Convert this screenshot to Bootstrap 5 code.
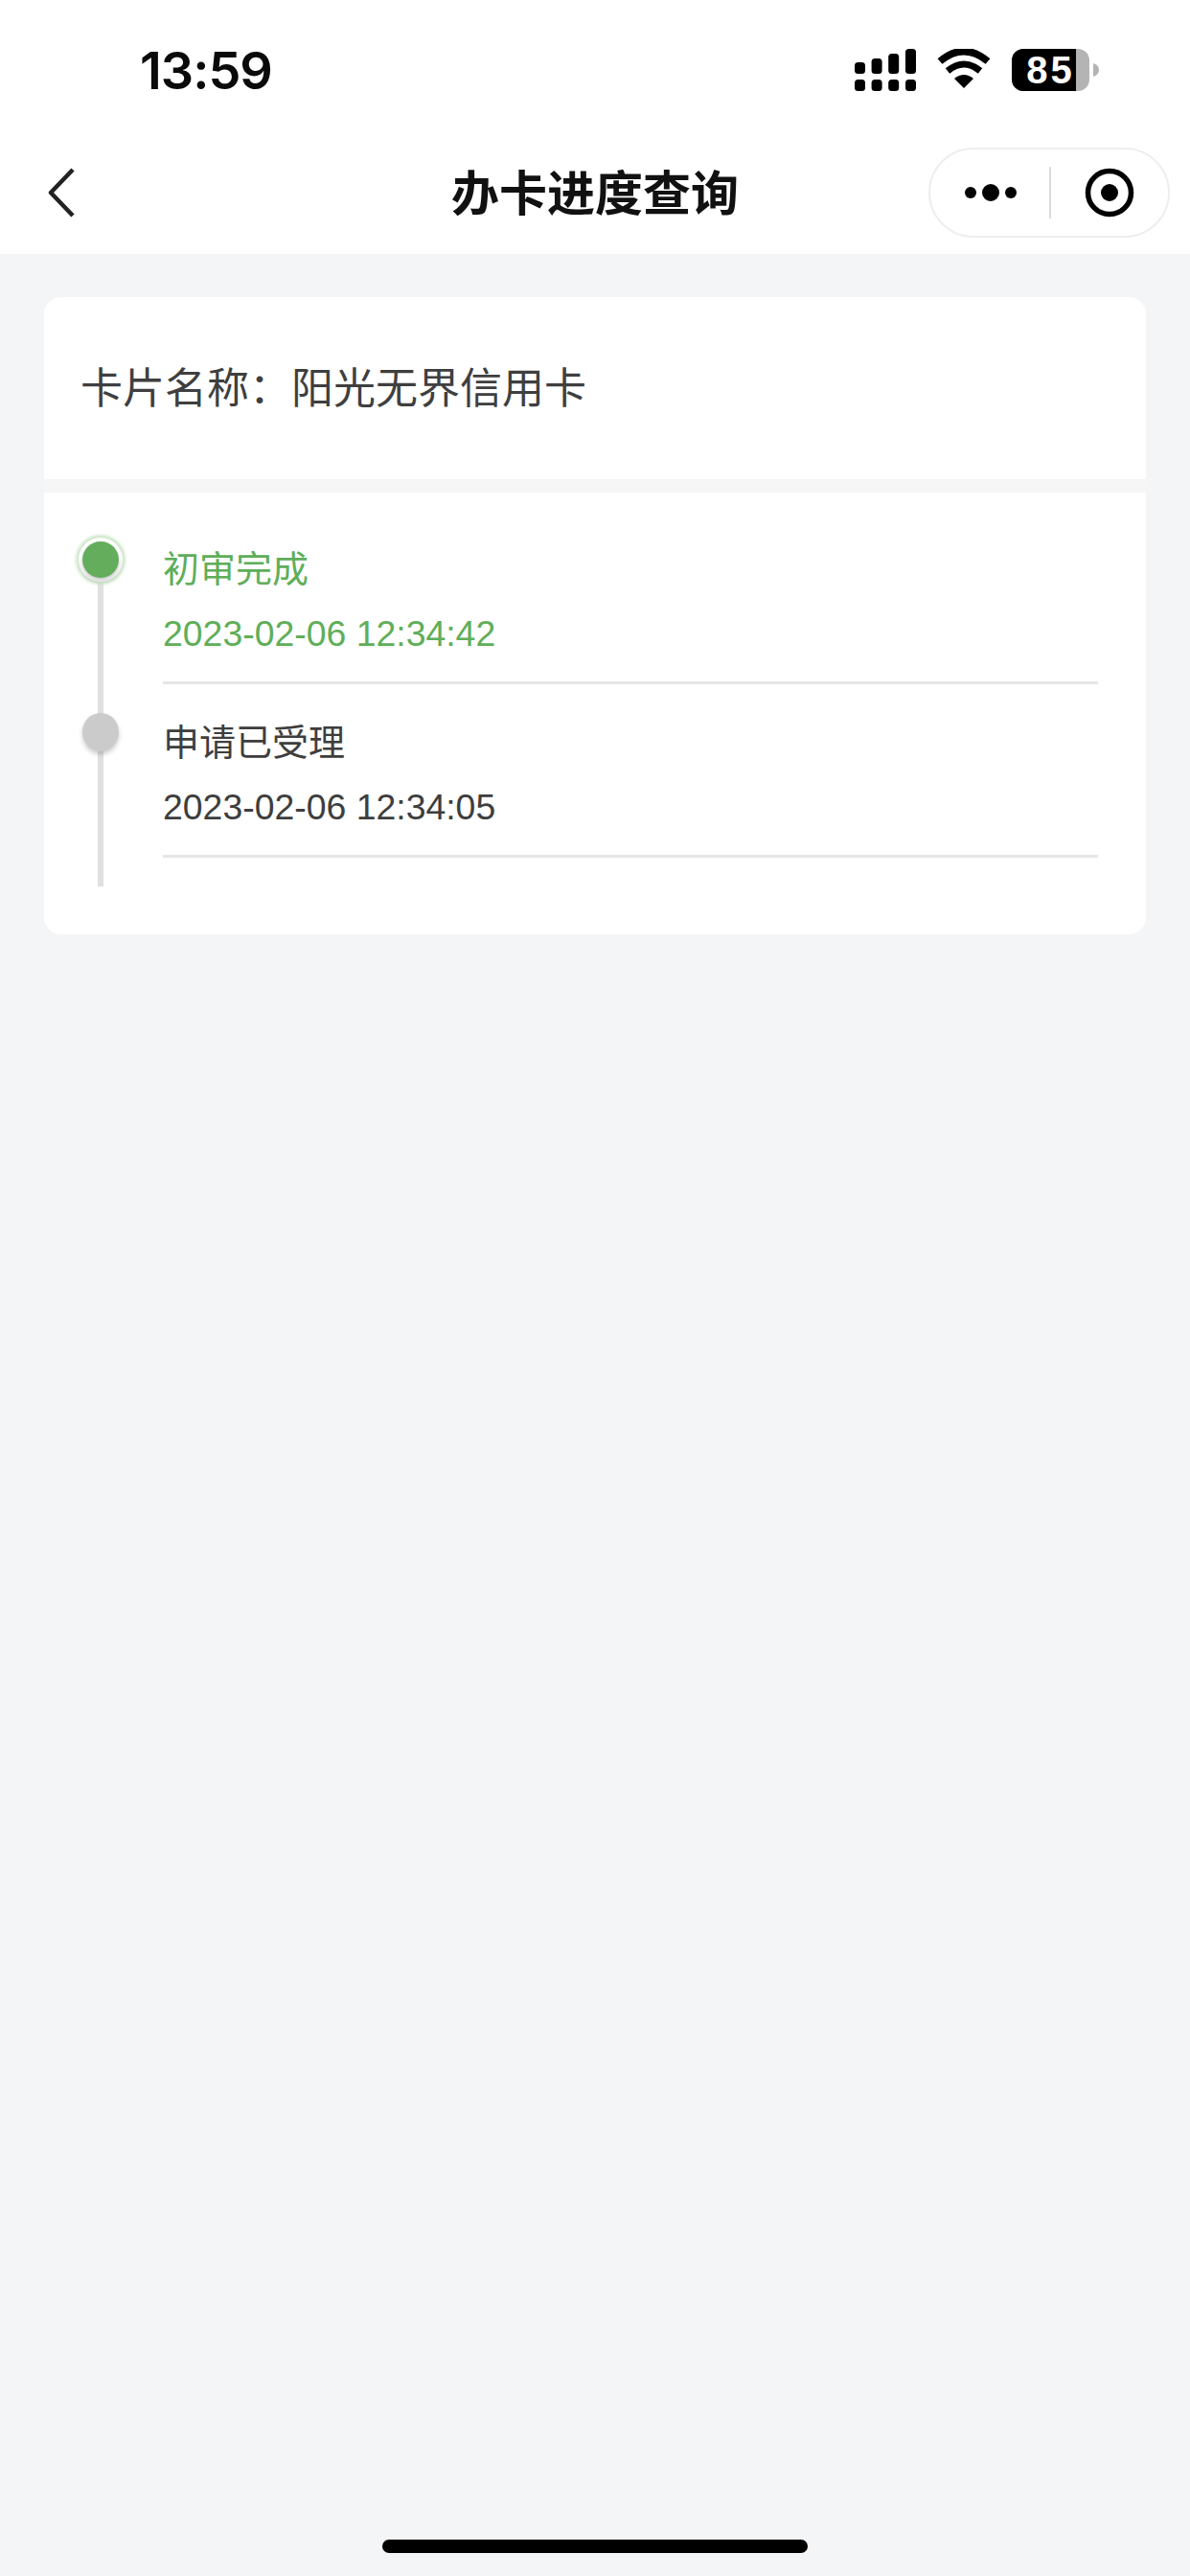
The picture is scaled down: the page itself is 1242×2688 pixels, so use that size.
<!DOCTYPE html>
<html lang="zh-CN">
<head>
<meta charset="utf-8">
<title>办卡进度查询</title>
<link rel="stylesheet" href="https://cdn.jsdelivr.net/npm/bootstrap@5.3.0/dist/css/bootstrap.min.css">
<style>
html, body { height: 100%; }
body { background: #f4f5f7; font-family: "Liberation Sans", "Noto Sans CJK SC", sans-serif; color: #3e3e3e; }
.phone { width: 1242px; height: 2688px; }
.top-area { height: 265px; background: #fff; }
.status-row { height: 89px; padding-left: 146px; padding-right: 95px; padding-top: 46px; }
.clock { font-family: Inter, sans-serif; font-weight: 600; font-size: 54px; line-height: 56px; color: #0a0a0a; letter-spacing: -1px; }
.status-icons { gap: 22px; padding-top: 5px; }
.batt { width: 81px; height: 44px; border-radius: 12px; overflow: hidden; background: #b4b4b4; }
.batt-fill { width: 67px; height: 44px; background: #000; color: #fff; font-family: "Liberation Sans", sans-serif; font-weight: 700; font-size: 40px; line-height: 44px; text-align: center; letter-spacing: 3px; padding-left: 14px; }
.batt-nub { margin-left: 4px; }
.nav-row { height: 176px; padding-left: 50px; padding-right: 21px; position: relative; }
.nav-name { font-family: "Noto Sans CJK SC", sans-serif; font-weight: 700; font-size: 50px; line-height: 60px; color: #111; position: absolute; left: 0; right: 0; top: 79px; text-align: center; }
.capsule { width: 252px; height: 94px; border: 2px solid #eeeeee; border-radius: 47px; margin-top: 65px; position: relative; background: #fff; }
.capsule-more { padding-left: 4px; }
.capsule-split { width: 2px; height: 54px; background: #dcdcdc; }
.capsule-side { width: 122px; }
.back-ico { margin-top: 86px; }
.sheet { margin: 45px 46px 0; border-radius: 18px; overflow: hidden; background: #fff; }
.sheet-head { height: 190px; padding-left: 38px; padding-bottom: 6px; font-family: "Noto Sans CJK SC", sans-serif; font-size: 44px; line-height: 60px; color: #3f3f3f; }
.sheet-gap { height: 14px; background: #f6f6f7; }
.flow { position: relative; padding: 19px 50px 80px 33px; }
.flow-line { position: absolute; left: 56px; top: 60px; width: 6px; height: 351px; background: #e0e0e0; }
.step-rail { width: 52px; flex: none; position: relative; }
.step-dot { width: 38px; height: 40px; border-radius: 50%; position: absolute; left: 7px; top: 30px; background: #cbcbcb; box-shadow: 0 3px 5px rgba(0,0,0,.2); }
.step-dot.on { height: 38px; top: 32px; background: #63ad5c; box-shadow: 0 3px 5px rgba(0,0,0,.22), 0 0 0 4px #fff, 0 0 3px 7px #d0e7cd; }
.step-body { margin-left: 39px; padding: 33px 0 25px; border-bottom: 3px solid #e6e6e6; }
.step-title { font-family: "Noto Sans CJK SC", sans-serif; font-size: 38px; line-height: 50px; }
.step-time { font-size: 37.4px; line-height: 50px; margin-top: 20px; }
.step-on { color: #5fae59; }
.home-bar { width: 444px; height: 14px; border-radius: 7px; background: #000; margin: 0 auto; }
</style>
</head>
<body>
<div class="phone d-flex flex-column">
  <header class="top-area">
    <div class="status-row d-flex justify-content-between align-items-start">
      <span class="clock">13:59</span>
      <div class="status-icons d-flex align-items-start">
        <svg width="64" height="44" viewBox="0 0 64 44" fill="#000" aria-hidden="true">
          <rect x="0" y="14" width="11" height="12" rx="3.5"/><rect x="17.6" y="10" width="11" height="16" rx="3.5"/><rect x="35.2" y="5" width="11" height="21" rx="3.5"/><rect x="53" y="0" width="11" height="26" rx="3.5"/>
          <rect x="0" y="32" width="11" height="12" rx="3.5"/><rect x="17.6" y="32" width="11" height="12" rx="3.5"/><rect x="35.2" y="32" width="11" height="12" rx="3.5"/><rect x="53" y="32" width="11" height="12" rx="3.5"/>
        </svg>
        <svg width="56" height="42" viewBox="0 0 56 42" aria-hidden="true">
          <path d="M28 41 L18 31 Q28 23 38 31Z" fill="#000"/>
          <path d="M11 23 Q28 9 45 23" fill="none" stroke="#000" stroke-width="7"/>
          <path d="M3 13 Q28 -8 53 13" fill="none" stroke="#000" stroke-width="7.5"/>
        </svg>
        <div class="d-flex align-items-center">
          <div class="batt"><div class="batt-fill">85</div></div>
          <svg class="batt-nub" width="6" height="14" viewBox="0 0 6 14" aria-hidden="true"><path d="M0 0 Q6 2 6 7 Q6 12 0 14Z" fill="#b4b4b4"/></svg>
        </div>
      </div>
    </div>
    <nav class="nav-row d-flex justify-content-between align-items-start">
      <svg class="back-ico" width="28" height="52" viewBox="0 0 28 52" aria-hidden="true"><path d="M26 2 L3 26 L26 50" fill="none" stroke="#222" stroke-width="4.5" stroke-linejoin="round"/></svg>
      <div class="nav-name">办卡进度查询</div>
      <div class="capsule d-flex align-items-center">
        <div class="capsule-more flex-fill d-flex justify-content-center"><svg width="56" height="20" viewBox="0 0 56 20" fill="#000" aria-hidden="true"><circle cx="6" cy="10" r="6"/><circle cx="27" cy="10" r="9"/><circle cx="48" cy="10" r="6"/></svg></div>
        <div class="capsule-split"></div>
        <div class="capsule-side d-flex justify-content-center"><svg width="52" height="52" viewBox="0 0 52 52" aria-hidden="true"><circle cx="26" cy="26" r="22.5" fill="none" stroke="#000" stroke-width="5.5"/><circle cx="26" cy="26" r="9" fill="#000"/></svg></div>
      </div>
    </nav>
  </header>
  <main class="flex-grow-1 d-flex flex-column">
    <section class="sheet">
      <div class="sheet-head d-flex align-items-center">卡片名称：阳光无界信用卡</div>
      <div class="sheet-gap"></div>
      <div class="flow">
        <div class="flow-line"></div>
        <div class="d-flex">
          <div class="step-rail"><div class="step-dot on"></div></div>
          <div class="step-body flex-grow-1 step-on">
            <div class="step-title">初审完成</div>
            <div class="step-time">2023-02-06 12:34:42</div>
          </div>
        </div>
        <div class="d-flex">
          <div class="step-rail"><div class="step-dot"></div></div>
          <div class="step-body flex-grow-1">
            <div class="step-title">申请已受理</div>
            <div class="step-time">2023-02-06 12:34:05</div>
          </div>
        </div>
      </div>
    </section>
    <div class="mt-auto pb-4"><div class="home-bar"></div></div>
  </main>
</div>
<script src="https://cdn.jsdelivr.net/npm/bootstrap@5.3.0/dist/js/bootstrap.bundle.min.js"></script>
</body>
</html>
